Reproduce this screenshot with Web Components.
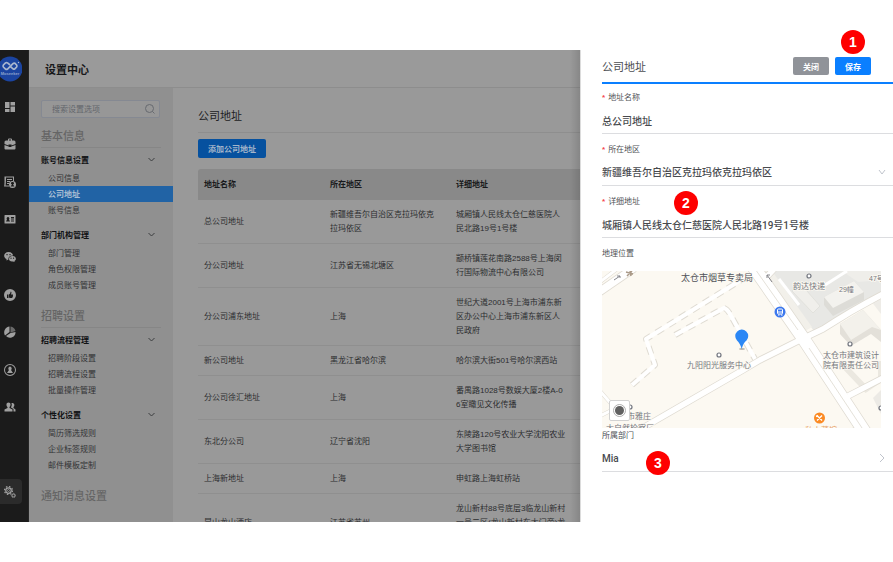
<!DOCTYPE html>
<html lang="zh-CN">
<head>
<meta charset="utf-8">
<title>设置中心</title>
<style>
html,body{margin:0;background:#fff}
body{font-family:"Liberation Sans","Noto Sans CJK SC",sans-serif;font-size:8px;color:#303133}
</style>
</head>
<body>
<settings-app></settings-app>
<script>
const define = (name, html, setup) => customElements.define(name, class extends HTMLElement {
  connectedCallback() {
    if (this.shadowRoot) return;
    const t = document.createElement('template');
    t.innerHTML = '<style>*{box-sizing:border-box}button,input,select{font-family:inherit;margin:0}</style>' + (typeof html === 'function' ? html(this) : html);
    this.attachShadow({mode: 'open'}).append(t.content.cloneNode(true));
    if (setup) setup(this);
  }
});

const icons = {
  grid: ['工作台', '<path d="M2 2h9v12H2zM13 2h9v7h-9zM2 16h9v6H2zM13 11h9v11h-9z"/>'],
  bag: ['职位', '<path d="M8 5V3q0-2 2-2h4q2 0 2 2v2h4q3 0 3 3v4l-8 3v-2H9v2l-8-3V8q0-3 3-3zM10 3v2h4V3zM1 14l8 3q3 2 6 0l8-3v7q0 2-2 2H3q-2 0-2-2z"/>'],
  doc: ['候选人', '<path d="M1 1h19v9h-2V3H4q0 12-1 16h7v2H0q1-3 1-8zM6 6h10v2H6zM6 10h6v2H6zM6 14h4v2H6z"/><path fill-rule="evenodd" d="M17 10a7 7 0 1 1 0 14 7 7 0 0 1 0-14m0 2a2.500 2.500 0 0 0-1 5l-3 4h8l-3-4a2.500 2.500 0 0 0-1-5"/>'],
  card: ['人才库', '<path fill-rule="evenodd" d="M2 4h20q1 0 1 1v15q0 1-1 1H2q-1 0-1-1V5q0-1 1-1m6 4a3 3 0 0 0-2 5l-2 4h8l-2-4a3 3 0 0 0-2-5m6 0v2h6V8zm0 3v2h6v-2zm0 4v2h6v-2z"/>'],
  chat: ['微信', '<path fill-rule="evenodd" d="M9 2c6 0 9 4 9 7-7 0-10 4-9 8l-4 2v-3C-3 12 0 2 9 2M6 6a1.300 1.300 0 1 0 .1 0M12 6a1.300 1.300 0 1 0 .1 0"/><path fill-rule="evenodd" d="M17 10c7 0 9 7 4 10v2l-3-1c-5 1-8-2-8-5 0-4 3-6 7-6m-3 3a1.200 1.200 0 1 0 .1 0m5 0a1.200 1.200 0 1 0 .1 0"/>'],
  like: ['推荐', '<path fill-rule="evenodd" d="M12 0a12 12 0 1 1 0 24 12 12 0 0 1 0-24M6 11v7h3v-7zm4 0v6l2 1h4q2 0 2-6v-1h-4l1-4q-1-3-2-1 0 3-3 5"/>'],
  pie: ['报表', '<path d="M11 1v11L2 19A12 12 0 0 1 11 1M23 12a11 11 0 0 1-19 8l9-6z"/><path opacity=".6" d="M13 1q8 1 10 9l-10 3z"/>'],
  user: ['账号', '<path fill-rule="evenodd" d="M12 0a12 12 0 1 1 0 24 12 12 0 0 1 0-24m0 2a10 10 0 1 0 0 20 10 10 0 0 0 0-20"/><path d="M12 5a4 4 0 0 1 2 7l4 6H6l4-6a4 4 0 0 1 2-7"/>'],
  team: ['团队', '<path d="M9 3c5 0 5 6 2 9v2l6 3v4H1v-4l6-3v-2C4 9 4 3 9 3M16 4c5 0 6 5 3 8v2l4 3v4h-4v-5l-5-3q3-4 1-9z"/>'],
  gear: ['设置', '<g fill="none" stroke="currentColor"><circle cx="9" cy="9" r="5.500" stroke-width="2.500"/><circle cx="9" cy="9" r="8" stroke-width="2.500" stroke-dasharray="3 3.280"/><circle cx="9" cy="9" r="2" stroke-width="1.500"/><circle cx="19" cy="19" r="2.800" stroke-width="2"/><circle cx="19" cy="19" r="4.300" stroke-width="1.500" stroke-dasharray="2 1.380"/></g>']
};

define('rail-button', el => `
<style>
:host{display:grid}
button{display:grid;align-items:center;justify-items:start;border:0;background:none;padding:0 0 0 4px;color:#a0a0a0}
:host([active]) button{background:#2b2b2b;border-radius:0 4px 4px 0;height:25px}
svg{display:block;width:12px;height:12px;fill:currentColor}
</style>
<button aria-label="${icons[el.getAttribute('icon')][0]}"><svg viewBox="0 0 24 24">${icons[el.getAttribute('icon')][1]}</svg></button>`);

define('icon-rail', `
<style>
:host{display:flex;flex-direction:column;flex:0 0 29px;background:#1b1b1b;overflow:hidden;border-right:1px solid #252525}
.logo{height:38px;display:flex;align-items:center}
.logo svg{display:block;width:24px;height:26px;margin-left:-2px}
.list{display:grid;grid-auto-rows:1fr;height:338px}
.end{margin-top:auto;width:22px;padding-bottom:18px}
</style>
<div class="logo"><svg viewBox="0 0 24 26"><circle cx="12" cy="13" r="12.500" fill="#1b44a0"/>
<path d="M11.500 8.500L9.500 6.900Q8.500 6.200 7.500 6.900L5.400 9Q4.700 10 5.400 11L7.500 13Q8.500 13.800 9.500 13L15 7.600Q16 6.600 17 7.300L18.600 9Q19.300 10 18.600 11L16.800 12.800Q16 13.500 15 12.800L12.800 10.800" fill="none" stroke="#a9b6cf" stroke-width="1.700" stroke-linecap="round"/><circle cx="20.500" cy="6.500" r=".7" fill="#a9b6cf"/>
<text x="12" y="19" font-size="4" font-weight="700" text-anchor="middle" fill="#8fa3cb">Moseeker</text></svg></div>
<div class="list">${['grid','bag','doc','card','chat','like','pie','user','team'].map(i => `<rail-button icon="${i}"></rail-button>`).join('')}</div>
<div class="end"><rail-button icon="gear" active></rail-button></div>`);

define('nav-section', el => `
<style>
:host{display:block}
h2{margin:0 12px 3px;padding:5px 0 1px;border-bottom:1px solid #868686;font-size:11px;line-height:20px;font-weight:500;color:#656565}
:host(:last-of-type) h2{border-color:transparent}
</style>
<h2>${el.getAttribute('heading')}</h2><slot></slot>`);

define('nav-group', el => `
<style>
:host{display:block;padding-bottom:8px}
button{display:flex;align-items:center;justify-content:space-between;width:100%;height:16px;margin-bottom:3px;padding:0 18px 0 12px;border:0;background:none;font-size:8px;font-weight:700;color:#111214}
svg{width:7px;height:5px;fill:none;stroke:#3b3c3e;display:block}
a{display:block;height:16px;line-height:18px;padding-left:19px;color:#323335;text-decoration:none}
a[aria-current]{background:#2163a5;color:#a9bdd3;font-weight:700}
</style>
<button aria-expanded="true">${el.getAttribute('heading')}<svg viewBox="0 0 7 5"><path d="M.5 1l3 3 3-3"/></svg></button>
<nav>${el.getAttribute('items').split(',').map(t => `<a href="#"${t === el.getAttribute('current') ? ' aria-current="page"' : ''}>${t}</a>`).join('')}</nav>`);

define('search-box', `
<style>
:host{display:flex;align-items:center;height:18px;margin:12px 13px 3px 12px;padding:0 4px 0 10px;border:1px solid #858992;border-radius:2px;background:#979797}
input{flex:1;min-width:0;border:0;padding:0;background:none;font-size:8px;outline:0}
input::placeholder{color:#63666c;opacity:1}
svg{width:10px;height:10px;fill:none;stroke:#676a70;display:block}
</style>
<input type="search" aria-label="搜索设置选项" placeholder="搜索设置选项">
<svg viewBox="0 0 10 10"><circle cx="4.500" cy="4.500" r="4"/><path d="M7.500 7.500L9.500 9.500"/></svg>`);

define('settings-nav', `
<style>:host{display:block;flex:0 0 144px;background:#909090;overflow:hidden}</style>
<search-box></search-box>
<nav-section heading="基本信息">
<nav-group heading="账号信息设置" items="公司信息,公司地址,账号信息" current="公司地址"></nav-group>
<nav-group heading="部门机构管理" items="部门管理,角色权限管理,成员账号管理"></nav-group>
</nav-section>
<nav-section heading="招聘设置">
<nav-group heading="招聘流程管理" items="招聘阶段设置,招聘流程设置,批量操作管理"></nav-group>
<nav-group heading="个性化设置" items="简历筛选规则,企业标签规则,邮件模板定制"></nav-group>
</nav-section>
<nav-section heading="通知消息设置"></nav-section>`);

const rows = [
  ['总公司地址', '新疆维吾尔自治区克拉玛依克拉玛依区', '城厢镇人民线太仓仁慈医院人民北路19号1号楼'],
  ['分公司地址', '江苏省无锡北塘区', '颛桥镇莲花南路2588号上海闵行国际物流中心有限公司'],
  ['分公司浦东地址', '上海', '世纪大道2001号上海市浦东新区办公中心上海市浦东新区人民政府'],
  ['新公司地址', '黑龙江省哈尔滨', '哈尔滨大街501号哈尔滨西站'],
  ['分公司徐汇地址', '上海', '番禺路1028号数娱大厦2楼A-06室瞰见文化传播'],
  ['东北分公司', '辽宁省沈阳', '东陵路120号农业大学沈阳农业大学图书馆'],
  ['上海新地址', '上海', '申虹路上海虹桥站'],
  ['昆山龙山酒店', '江苏省苏州', '龙山新村88号底层3临龙山新村一号二区(龙山新村东大门旁)龙山酒店']
];
define('address-table', `
<style>
:host{display:block}
table{width:100%;table-layout:fixed;border-collapse:separate;border-spacing:0;line-height:14px;color:#2c2d2f}
col{width:126px}col:last-child{width:auto}
th,td{text-align:left;word-break:break-all}
th{height:31px;padding:0 6px;background:#898989;color:#18191b;font-weight:700}
th:first-child{border-radius:3px 0 0 0}
td{padding:8px 10px 7px 6px;border-bottom:1px solid #8f8f8f}
td:last-child{padding-right:14px}
</style>
<table><colgroup><col><col><col></colgroup>
<thead><tr><th>地址名称</th><th>所在地区</th><th>详细地址</th></tr></thead>
<tbody>${rows.map(r => `<tr>${r.map(c => `<td>${c}</td>`).join('')}</tr>`).join('')}</tbody></table>`);

define('address-page', `
<style>
:host{display:block;flex:1;min-width:0;overflow:hidden;padding:17px 0 0 25px;background:#999}
h2{margin:0 0 6px;padding-bottom:5px;border-bottom:1px solid #8e8e8e;font-size:11px;line-height:22px;font-weight:400;color:#202123}
button{display:block;height:19px;margin-bottom:11px;padding:0 10px;border:0;border-radius:2px;background:#06519f;color:#a3b5ca;font-size:8px;font-weight:700}
</style>
<h2>公司地址</h2>
<button>添加公司地址</button>
<address-table></address-table>`);

define('step-badge', `
<style>
:host{position:absolute;display:grid;place-items:center;width:24px;height:24px;border-radius:50%;background:#fe0000;color:#fff;font-size:14px;line-height:24px;font-weight:700}
</style><slot></slot>`);

define('action-button', el => `
<style>
:host{display:block;position:relative}
button{display:block;height:18px;width:36px;padding:0;border:0;border-radius:2px;background:#909399;color:#fff;font-size:8px;font-weight:700}
:host([primary]) button{background:#0a7fff}
</style>
<button>${el.getAttribute('label')}</button><slot></slot>`);

define('form-field', el => {
  const v = el.getAttribute('value'), kind = el.getAttribute('kind');
  const control = kind === 'select' ? `<select id="f"><option>${v}</option></select><svg viewBox="0 0 10 10"><path d="M2 3l3 4 3-4"/></svg>`
    : kind === 'picker' ? `<button id="f">${v}</button><svg viewBox="0 0 10 10"><path d="M3 1l4 4-4 4"/></svg>`
    : `<input id="f" value="${v}">`;
  return `
<style>
:host{display:block;position:relative}
label{display:block;line-height:16px;color:#505256}
i{font-style:normal;font-weight:700;color:#f5484d;margin-right:3px}
.box{display:flex;align-items:center;height:28px;padding:1px 6px 0 0;border-bottom:1px solid #dcdde0}
#f{flex:1;min-width:0;height:24px;border:0;padding:0;background:none;appearance:none;text-align:left;font-family:Roboto,"Noto Sans CJK SC",sans-serif;font-size:10px;font-weight:500;color:#484a4e;outline:0}
svg{width:10px;height:10px;fill:none;stroke:#c0c4cc;stroke-width:1;display:block}
</style>
<label for="f">${el.hasAttribute('required') ? '<i>*</i>' : ''}${el.getAttribute('label')}</label>
<div class="box">${control}</div><slot></slot>`;
});

define('location-map', `
<style>
:host{display:block;position:relative;height:157px;margin-right:12px;overflow:hidden;background:#fcf9f2}
svg{display:block;width:100%;height:100%}
button{position:absolute;left:7px;bottom:7px;width:21px;height:21px;padding:0;border:1px solid #d2d2d2;border-radius:2px;background:#fff}
text{fill:#75777d}
</style>
<svg viewBox="0 0 279 157" preserveAspectRatio="xMinYMin slice" font-size="8">
<path d="M160 0H279V26L212 60 172 8z" fill="#e8e8e5"/>
<path d="M158 0h12l40 56-12 7z" fill="#f2f0ea"/>
<path d="M190 20l8-8 20 23-7 7z" fill="#f0efeb" stroke="#dddcd7" stroke-width=".7"/>
<path d="M222 26l30-16 10 11v8l-31 16-9-11z" fill="#dddcd7"/><path d="M222 26l30-16 10 11-31 16z" fill="#f3f2ee"/>
<path d="M240 0h39v9l-23 2z" fill="#efeeea"/>
<path d="M238 53l23-14 18 20v12l-10-8-20 12-11-12z" fill="#e3e0d9"/><path d="M238 53l23-14 18 20-9-3-21 13z" fill="#f3f1eb"/>
<path d="M242 95l22 23 15-10V90" fill="none" stroke="#ebe8e0" stroke-width="6"/>
<path d="M271 127l8-8v24z" fill="#eceae5"/><path d="M269 30l10-6v19z" fill="#eeece7"/>
<g fill="none" stroke-linejoin="round">
<g stroke="#dfdbd2"><path stroke-width="9" d="M-3 21L32-3"/><path stroke-width="4" d="M-2 11L15-2M-2 120l14 16M-2 145l12-6"/>
<path stroke-width="6" stroke-dasharray="8 6" d="M30 114L53 94 44 68 147 4M73 64L122 37Q125 38 128 43L153 88"/>
<path stroke-width="7" d="M32 162L141 99 158 89 198 69 221 58Q250 39 281 23M246 125l35-18M262 156l-20 8M161 10l11-12"/>
<path stroke-width="14" d="M151-5L201 67 266 166"/></g>
<g stroke="#fff"><path stroke-width="7.500" d="M-3 21L32-3"/><path stroke-width="3" d="M-2 11L15-2M-2 120l14 16M-2 145l12-6"/>
<path stroke-width="4" d="M30 114L53 94 44 68 147 4M73 64L122 37Q125 38 128 43L153 88"/>
<path stroke-width="5.500" d="M32 162L141 99 158 89 198 69 221 58Q250 39 281 23M246 125l35-18M262 156l-20 8M161 10l11-12"/>
<path stroke-width="3" d="M177 8l20 26M223 14l22-14"/>
<path stroke-width="12.500" d="M151-5L201 67 266 166"/></g>
<path stroke="#ddd9cf" stroke-width=".8" d="M151-5L196 59M207 77L266 166"/>
<path stroke="#85858a" d="M12 9l6-4m-3 0h3v2M170 11l-5-7m0 3V4h3"/>
<path stroke="#aa9a88" stroke-width="1.500" d="M24 1l7 2m-6 2l5-5m-2 0l1 5"/>
<g stroke="#71757e" stroke-width="1.200" fill="#fff"><circle cx="117" cy="84" r="2"/><circle cx="207" cy="5" r="2"/><circle cx="248" cy="73" r="2"/><circle cx="28" cy="136" r="2"/><circle cx="279" cy="137" r="2"/></g>
</g>
<g stroke="#fcf9f2" stroke-width="1.500" paint-order="stroke">
<text x="79" y="10" font-size="9" style="fill:#505258">太仓市烟草专卖局</text>
<text x="191" y="18">韵达快递</text><text x="237" y="21" font-size="7">29幢</text><text x="267" y="10" font-size="7">47号</text>
<text x="85" y="97">九阳阳光服务中心</text>
<text x="221" y="87">太仓市建筑设计</text><text x="221" y="97">院有限责任公司</text>
<text x="25" y="148">市雅庄</text><text x="4" y="160">太自然检察厂</text>
<text x="203" y="162" style="fill:#e9a568">私人菜馆</text>
</g>
<circle cx="178" cy="41" r="5.500" fill="#3c78ee"/><rect x="175.500" y="38" width="5" height="5" rx="1" fill="none" stroke="#fff"/><path d="M175 41h6M176 44h1.500M179 44h1.500" stroke="#fff"/>
<circle cx="217.500" cy="147" r="5.500" fill="#fb8a24"/><path d="M215 144.500l5 5m0-5l-5 5m-1-4l2-1" stroke="#fff" stroke-width="1.400"/>
<ellipse cx="140" cy="78" rx="3" ry="1" fill="#b9b5ad"/>
<path d="M139.700 78Q138 72 135 69.500A6.500 6.500 0 1 1 144.500 69.500Q141 72 139.700 78" fill="#2b87f5"/>
</svg>
<button aria-label="定位"><svg viewBox="0 0 19 19"><circle cx="9.500" cy="9.500" r="6" fill="none" stroke="#999" stroke-width=".8"/><circle cx="9.500" cy="9.500" r="4.500" fill="#606060"/></svg></button>`);

define('address-drawer', `
<style>
:host{display:block;position:relative;flex:0 0 313px;padding-left:21px;border-left:1px solid #dcdcdc;background:#fff}
:host::before{content:"";position:absolute;top:0;bottom:0;left:-11px;width:10px;background:linear-gradient(90deg,transparent,#0000001f)}
header{display:flex;align-items:center;gap:6px;height:34px;padding-right:22px;border-bottom:2px solid #0a7fff}
h2{flex:1;margin:0;font-size:11px;font-weight:400;color:#4c4e52}
form{display:grid;gap:8px;padding-top:6px}
.label{line-height:16px;margin-bottom:9px;color:#505256}
.save{left:6px;bottom:21px}
.detail{left:72px;top:-3px}
.dept{left:44px;top:23px}
</style>
<header><h2>公司地址</h2>
<action-button label="关闭"></action-button>
<action-button label="保存" primary><step-badge class="save">1</step-badge></action-button></header>
<form>
<form-field label="地址名称" value="总公司地址" required></form-field>
<form-field label="所在地区" value="新疆维吾尔自治区克拉玛依克拉玛依区" kind="select" required></form-field>
<form-field label="详细地址" value="城厢镇人民线太仓仁慈医院人民北路19号1号楼" required><step-badge class="detail">2</step-badge></form-field>
<div><div class="label">地理位置</div><location-map></location-map>
<form-field label="所属部门" value="Mia" kind="picker"><step-badge class="dept">3</step-badge></form-field></div>
</form>`);

define('settings-app', `
<style>
:host{display:flex;height:100vh;min-height:300px;padding:50px 0 40px;box-sizing:border-box}
.work{flex:1;min-width:0;display:flex;flex-direction:column;overflow:hidden;background:#999}
header{flex:0 0 38px;display:flex;align-items:center;padding-left:16px;border-bottom:1px solid #8d8d8d;background:#9a9a9a}
h1{margin:0;font-size:11px;font-weight:700;color:#161719}
.body{flex:1;min-height:0;display:flex}
</style>
<icon-rail></icon-rail>
<div class="work"><header><h1>设置中心</h1></header><div class="body"><settings-nav></settings-nav><address-page></address-page></div></div>
<address-drawer></address-drawer>`);
</script>
</body>
</html>
